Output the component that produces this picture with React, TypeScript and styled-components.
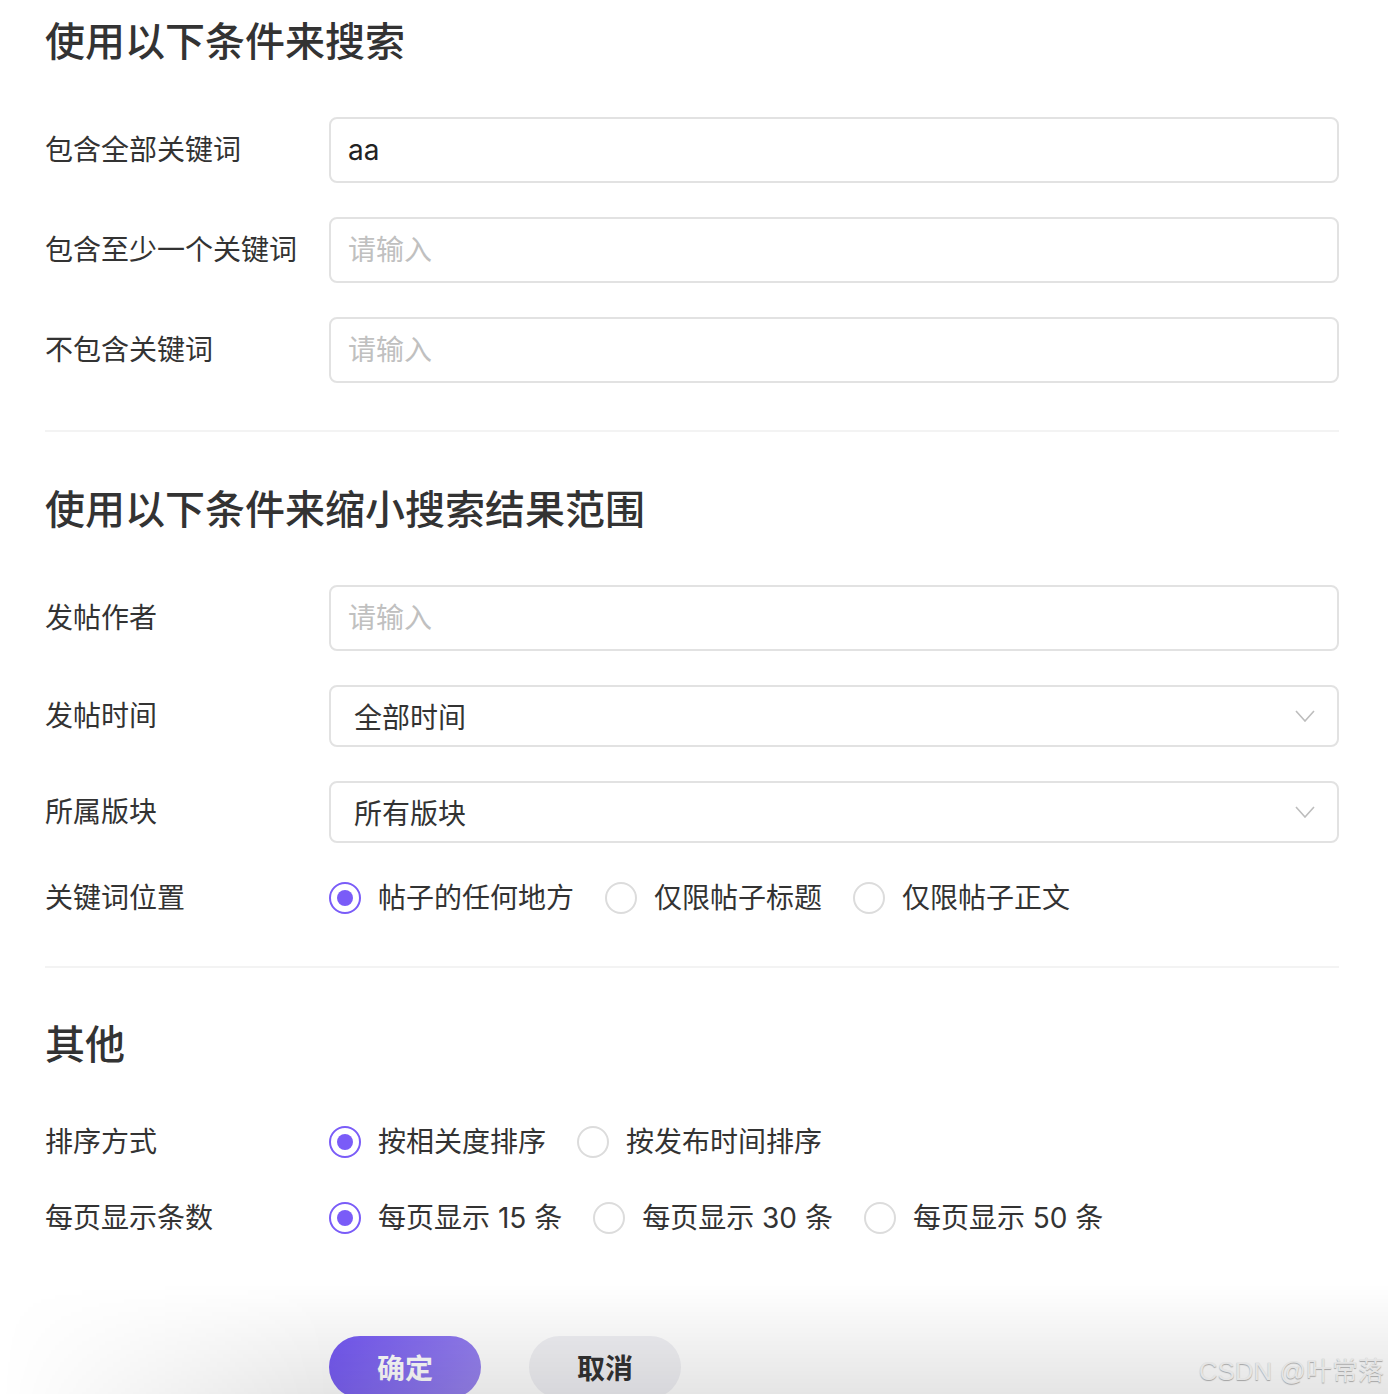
import styled, { createGlobalStyle } from "styled-components";
import { useState } from "react";

const GlobalStyle = createGlobalStyle`
  body {
    margin: 0;
    background: #fff;
    font-family: Inter, "Noto Sans CJK SC", sans-serif;
    color: #333;
  }
`;

const Page = styled.div`
  position: relative;
  height: 1394px;
  overflow: hidden;
  padding: 22px 49px 0 45px;
  box-sizing: border-box;
`;

const Title = styled.h2<{ $top?: number }>`
  margin: ${(p) => p.$top ?? 0}px 0 0;
  font-size: 40px;
  line-height: 40px;
  font-weight: 500;
  color: #333;
`;

const Form = styled.div<{ $top: number }>`
  margin-top: ${(p) => p.$top}px;
  display: grid;
  grid-template-columns: 284px 1fr;
  row-gap: 34px;
  align-items: center;
`;

const Label = styled.div`
  font-size: 28px;
  line-height: 32px;
  color: #333;
`;

const TextInput = styled.input`
  height: 66px;
  box-sizing: border-box;
  border: 2px solid #e2e2e2;
  border-radius: 8px;
  padding: 0 17px;
  font-family: inherit;
  font-size: 28px;
  color: #222;
  outline: none;
  &::placeholder {
    color: #c0c0c0;
  }
`;

const SelectBox = styled.div`
  height: 62px;
  box-sizing: border-box;
  border: 2px solid #e2e2e2;
  border-radius: 8px;
  padding: 0 22px 0 23px;
  display: flex;
  align-items: center;
  justify-content: space-between;
  font-size: 28px;
  color: #333;
`;

const Divider = styled.hr<{ $top: number }>`
  margin: ${(p) => p.$top}px 0 0;
  border: 0;
  height: 2px;
  background: #f3f3f3;
`;

const RadioGroup = styled.div`
  display: flex;
  align-items: center;
  gap: 31px;
  height: 42px;
`;

const Option = styled.label`
  display: flex;
  align-items: center;
  gap: 17px;
  font-size: 28px;
  line-height: 32px;
  color: #333;
  cursor: pointer;
`;

const Circle = styled.span<{ $on: boolean }>`
  width: 32px;
  height: 32px;
  box-sizing: border-box;
  border-radius: 50%;
  border: 2px solid ${(p) => (p.$on ? "#7a5cf8" : "#dcdcdc")};
  display: flex;
  align-items: center;
  justify-content: center;
  &::after {
    content: "";
    width: 16px;
    height: 16px;
    border-radius: 50%;
    background: ${(p) => (p.$on ? "#7a5cf8" : "transparent")};
  }
`;

const Buttons = styled.div`
  margin: 97px 0 0 284px;
  display: flex;
  gap: 48px;
`;

const Button = styled.button<{ $primary?: boolean }>`
  width: 152px;
  height: 62px;
  border: 0;
  border-radius: 31px;
  font-family: inherit;
  font-size: 28px;
  font-weight: 700;
  cursor: pointer;
  color: ${(p) => (p.$primary ? "#fff" : "#333")};
  background: ${(p) =>
    p.$primary ? "linear-gradient(120deg, #7458f4, #9a86ee)" : "#f0f0f4"};
`;

const Fade = styled.div`
  position: absolute;
  left: 0;
  right: 0;
  bottom: 0;
  height: 110px;
  pointer-events: none;
  background: linear-gradient(to bottom, rgba(0, 0, 0, 0), rgba(0, 0, 0, 0.1));
  -webkit-mask-image: linear-gradient(to right, transparent 0, #000 330px);
  mask-image: linear-gradient(to right, transparent 0, #000 330px);
`;

const Watermark = styled.div`
  position: absolute;
  right: 4px;
  bottom: 8px;
  font-size: 26px;
  line-height: 30px;
  color: #e4e4e4;
  font-family: "Liberation Sans", "Noto Sans CJK SC", sans-serif;
  text-shadow: 0 1px 1px rgba(0, 0, 0, 0.3);
  pointer-events: none;
`;

const Chevron = () => (
  <svg width="20" height="12" viewBox="0 0 20 12" fill="none">
    <path d="M1 1l9 10 9-10" stroke="#bdbdbd" strokeWidth="1.6" />
  </svg>
);

type RadioProps = {
  options: string[];
  value: number;
  onChange: (i: number) => void;
};

function Radios({ options, value, onChange }: RadioProps) {
  return (
    <RadioGroup>
      {options.map((o, i) => (
        <Option key={o} onClick={() => onChange(i)}>
          <Circle $on={value === i} />
          {o}
        </Option>
      ))}
    </RadioGroup>
  );
}

export default function App() {
  const [all, setAll] = useState("aa");
  const [place, setPlace] = useState(0);
  const [sort, setSort] = useState(0);
  const [perPage, setPerPage] = useState(0);

  return (
    <Page>
      <GlobalStyle />
      <Title>使用以下条件来搜索</Title>
      <Form $top={55}>
        <Label>包含全部关键词</Label>
        <TextInput value={all} onChange={(e) => setAll(e.target.value)} />
        <Label>包含至少一个关键词</Label>
        <TextInput placeholder="请输入" />
        <Label>不包含关键词</Label>
        <TextInput placeholder="请输入" />
      </Form>
      <Divider $top={47} />

      <Title $top={58}>使用以下条件来缩小搜索结果范围</Title>
      <Form $top={55}>
        <Label>发帖作者</Label>
        <TextInput placeholder="请输入" />
        <Label>发帖时间</Label>
        <SelectBox>
          全部时间
          <Chevron />
        </SelectBox>
        <Label>所属版块</Label>
        <SelectBox>
          所有版块
          <Chevron />
        </SelectBox>
        <Label>关键词位置</Label>
        <Radios
          options={["帖子的任何地方", "仅限帖子标题", "仅限帖子正文"]}
          value={place}
          onChange={setPlace}
        />
      </Form>
      <Divider $top={47} />

      <Title $top={57}>其他</Title>
      <Form $top={56}>
        <Label>排序方式</Label>
        <Radios
          options={["按相关度排序", "按发布时间排序"]}
          value={sort}
          onChange={setSort}
        />
        <Label>每页显示条数</Label>
        <Radios
          options={["每页显示 15 条", "每页显示 30 条", "每页显示 50 条"]}
          value={perPage}
          onChange={setPerPage}
        />
      </Form>

      <Buttons>
        <Button $primary>确定</Button>
        <Button>取消</Button>
      </Buttons>

      <Fade />
      <Watermark>CSDN @叶常落</Watermark>
    </Page>
  );
}
